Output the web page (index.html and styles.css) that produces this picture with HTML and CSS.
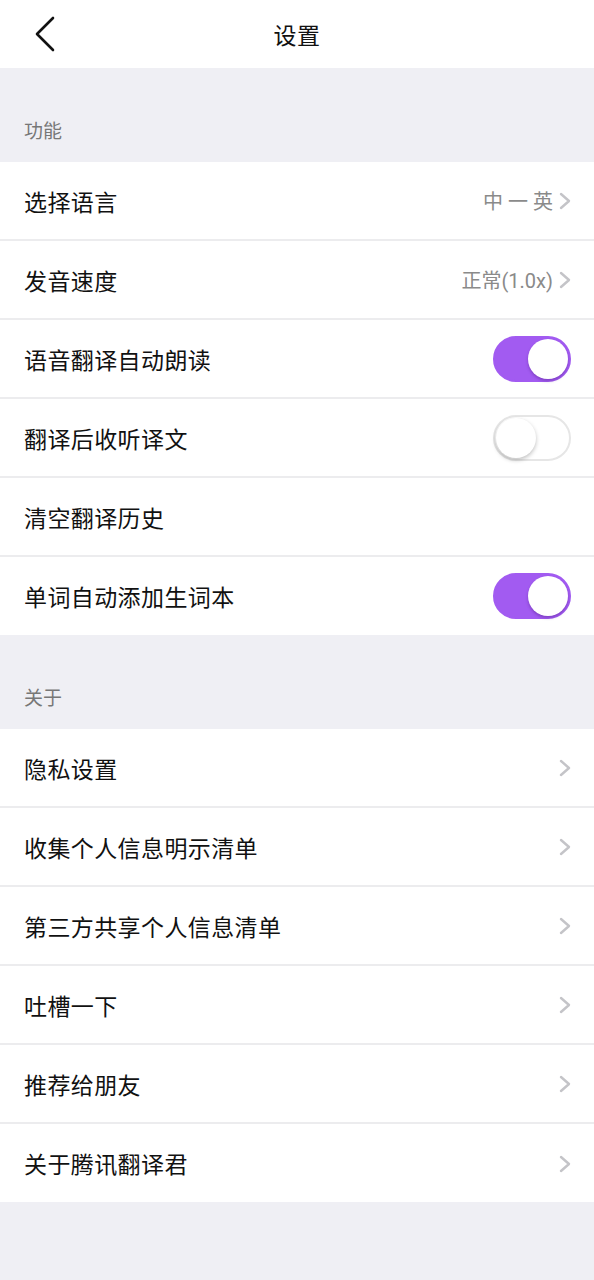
FILE: index.html
```html
<!DOCTYPE html>
<html>
<head>
    <title>设置</title>
    <link rel="stylesheet" href="styles.css">
</head>
<body>
    <div class="header">
        <svg class="back" width="22" height="36" viewBox="0 0 22 36">
            <path d="M19 2 L3 18 L19 34" fill="none" stroke="#111" stroke-width="2.6" stroke-linecap="round" stroke-linejoin="round"/>
        </svg>
        <div class="title">设置</div>
    </div>

    <div class="section-label">功能</div>
    <div class="group">
        <div class="row">
            <span class="name">选择语言</span>
            <span class="value">中 一 英</span>
            <svg class="arrow" width="12" height="18" viewBox="0 0 12 18"><path d="M2 2 L10 9 L2 16" fill="none" stroke="#c4c4c8" stroke-width="2.4" stroke-linecap="round" stroke-linejoin="round"/></svg>
        </div>
        <div class="row">
            <span class="name">发音速度</span>
            <span class="value">正常(1.0x)</span>
            <svg class="arrow" width="12" height="18" viewBox="0 0 12 18"><path d="M2 2 L10 9 L2 16" fill="none" stroke="#c4c4c8" stroke-width="2.4" stroke-linecap="round" stroke-linejoin="round"/></svg>
        </div>
        <div class="row">
            <span class="name">语音翻译自动朗读</span>
            <div class="switch on"><div class="knob"></div></div>
        </div>
        <div class="row">
            <span class="name">翻译后收听译文</span>
            <div class="switch"><div class="knob"></div></div>
        </div>
        <div class="row">
            <span class="name">清空翻译历史</span>
        </div>
        <div class="row">
            <span class="name">单词自动添加生词本</span>
            <div class="switch on"><div class="knob"></div></div>
        </div>
    </div>

    <div class="section-label">关于</div>
    <div class="group">
        <div class="row">
            <span class="name">隐私设置</span>
            <svg class="arrow" width="12" height="18" viewBox="0 0 12 18"><path d="M2 2 L10 9 L2 16" fill="none" stroke="#c4c4c8" stroke-width="2.4" stroke-linecap="round" stroke-linejoin="round"/></svg>
        </div>
        <div class="row">
            <span class="name">收集个人信息明示清单</span>
            <svg class="arrow" width="12" height="18" viewBox="0 0 12 18"><path d="M2 2 L10 9 L2 16" fill="none" stroke="#c4c4c8" stroke-width="2.4" stroke-linecap="round" stroke-linejoin="round"/></svg>
        </div>
        <div class="row">
            <span class="name">第三方共享个人信息清单</span>
            <svg class="arrow" width="12" height="18" viewBox="0 0 12 18"><path d="M2 2 L10 9 L2 16" fill="none" stroke="#c4c4c8" stroke-width="2.4" stroke-linecap="round" stroke-linejoin="round"/></svg>
        </div>
        <div class="row">
            <span class="name">吐槽一下</span>
            <svg class="arrow" width="12" height="18" viewBox="0 0 12 18"><path d="M2 2 L10 9 L2 16" fill="none" stroke="#c4c4c8" stroke-width="2.4" stroke-linecap="round" stroke-linejoin="round"/></svg>
        </div>
        <div class="row">
            <span class="name">推荐给朋友</span>
            <svg class="arrow" width="12" height="18" viewBox="0 0 12 18"><path d="M2 2 L10 9 L2 16" fill="none" stroke="#c4c4c8" stroke-width="2.4" stroke-linecap="round" stroke-linejoin="round"/></svg>
        </div>
        <div class="row">
            <span class="name">关于腾讯翻译君</span>
            <svg class="arrow" width="12" height="18" viewBox="0 0 12 18"><path d="M2 2 L10 9 L2 16" fill="none" stroke="#c4c4c8" stroke-width="2.4" stroke-linecap="round" stroke-linejoin="round"/></svg>
        </div>
    </div>
</body>
</html>
```

FILE: styles.css
```css
body {
    margin: 0;
    background-color: #efeff4;
    font-family: "Noto Sans CJK SC", "Noto Sans", sans-serif;
    color: #111;
    min-height: 1280px;
}

.header {
    height: 68px;
    background-color: #fff;
    display: flex;
    align-items: center;
    justify-content: center;
    position: relative;
}

.back {
    position: absolute;
    left: 34px;
    top: 16px;
}

.title {
    font-size: 23px;
    letter-spacing: 0.5px;
}

.section-label {
    height: 94px;
    box-sizing: border-box;
    padding: 48px 24px 0;
    font-size: 19px;
    color: #777;
}

.group {
    background-color: #fff;
}

.row {
    height: 77px;
    display: flex;
    align-items: center;
    padding: 0 23px 0 24px;
    border-bottom: 2px solid #ececee;
}

.row:last-child {
    border-bottom: none;
    height: 78px;
}

.name {
    flex: 1;
    font-size: 23px;
    letter-spacing: 0.4px;
}

.value {
    font-family: Roboto, "Noto Sans CJK SC", sans-serif;
    font-size: 20px;
    color: #8a8a8a;
    margin-right: 6px;
}

.arrow {
    display: block;
    margin-top: 1px;
}

.switch {
    width: 78px;
    height: 46px;
    box-sizing: border-box;
    border-radius: 23px;
    border: 2px solid #e6e6e6;
    background-color: #fff;
    position: relative;
}

.switch .knob {
    position: absolute;
    top: 1px;
    left: 1px;
    width: 40px;
    height: 40px;
    border-radius: 50%;
    background-color: #fff;
    box-shadow: 0 2px 4px rgba(0, 0, 0, 0.25);
}

.switch.on {
    border-color: #a25bf1;
    background-color: #a25bf1;
}

.switch.on .knob {
    left: auto;
    right: 1px;
    box-shadow: 0 2px 3px rgba(70, 20, 120, 0.35);
}
```
